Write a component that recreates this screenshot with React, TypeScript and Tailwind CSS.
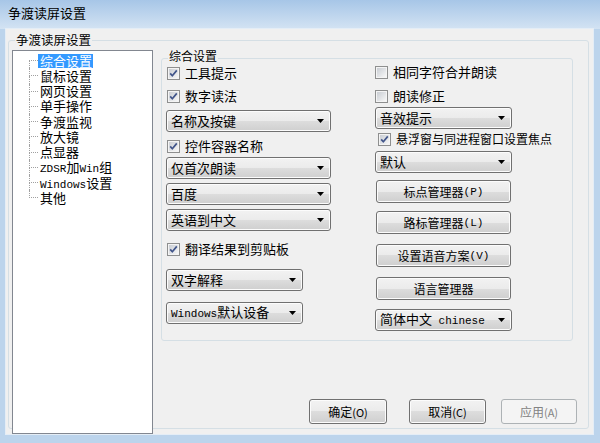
import type { ReactNode } from 'react'

const mono = "font-['Liberation_Mono','Noto_Sans_CJK_SC',monospace] text-[11px]"

function Box({ checked }: { checked?: boolean }) {
  return (
    <svg width="13" height="13" viewBox="0 0 13 13" className="shrink-0">
      <defs>
        <linearGradient id="cbg" x1="0" y1="0" x2="1" y2="1">
          <stop offset="0" stopColor="#c9cdd3" />
          <stop offset="1" stopColor="#f7f7f7" />
        </linearGradient>
      </defs>
      <rect x="0.5" y="0.5" width="12" height="12" fill="#f4f4f4" stroke="#8e8f8f" />
      <rect x="2" y="2" width="9" height="9" fill="url(#cbg)" />
      {checked && (
        <path d="M3.2 6.4 L5.3 8.8 L9.8 3.4" fill="none" stroke="#41558a" strokeWidth="1.7" strokeLinejoin="round" />
      )}
    </svg>
  )
}

function Check({ label, checked, className = '', text = 'text-[13px]' }: { label: string; checked?: boolean; className?: string; text?: string }) {
  return (
    <div className={`flex h-[16px] items-center gap-[5px] whitespace-nowrap ${className}`}>
      <Box checked={checked} />
      <span className={`${text} leading-[16px]`}>{label}</span>
    </div>
  )
}

function Select({ children, className = '' }: { children: ReactNode; className?: string }) {
  return (
    <div className={`flex h-[22px] items-center justify-between rounded-[3px] border border-[#707070] bg-[linear-gradient(#f2f2f2,#ebebeb_50%,#dddddd_50%,#cfcfcf)] pl-[4px] pr-[6px] shadow-[inset_0_0_0_1px_#fcfcfc] ${className}`}>
      <span className="whitespace-nowrap text-[13px] leading-[16px]">{children}</span>
      <svg width="7" height="4" viewBox="0 0 7 4">
        <path d="M0 0 H7 L3.5 4 Z" fill="#000" />
      </svg>
    </div>
  )
}

function Btn({ children, className = '', disabled }: { children: ReactNode; className?: string; disabled?: boolean }) {
  const look = disabled
    ? 'border-[#adb2b5] bg-[#f4f4f4] text-[#838383]'
    : 'border-[#707070] bg-[linear-gradient(#f2f2f2,#ebebeb_50%,#dddddd_50%,#cfcfcf)] shadow-[inset_0_0_0_1px_#fcfcfc]'
  return (
    <div className={`flex items-center justify-center whitespace-nowrap rounded-[3px] border text-[12px] leading-[16px] ${look} ${className}`}>
      {children}
    </div>
  )
}

const treeItems: ReactNode[] = [
  '综合设置',
  '鼠标设置',
  '网页设置',
  '单手操作',
  '争渡监视',
  '放大镜',
  '点显器',
  <>
    <span className={mono}>ZDSR</span>加<span className={mono}>Win</span>组
  </>,
  <>
    <span className={mono}>Windows</span>设置
  </>,
  '其他',
]

export default function App() {
  const last = treeItems.length - 1
  return (
    <div className="flex h-[443px] w-[600px] flex-col overflow-hidden bg-[#bcd4ec] font-['Noto_Sans_CJK_SC','Noto_Sans',sans-serif] text-black">
      {/* title bar */}
      <div className="flex h-[29px] shrink-0 items-center bg-[linear-gradient(#a7c6e7,#d3e3f3)] pb-[3px] pl-[8px] text-[13px] leading-[16px]">
        争渡读屏设置
      </div>

      {/* client */}
      <div className="ml-[6px] h-[405px] w-[587px] bg-[#f0f0f0] shadow-[0_0_0_1px_#e4edf6]">
        <div className="relative ml-[2px] mt-[11px] flex h-[389px] w-[581px] rounded-[3px] border border-[#d5dfe5]">
          <span className="absolute -top-[8px] left-[6px] bg-[#f0f0f0] px-[1px] text-[12.5px] leading-[14px]">争渡读屏设置</span>

          {/* tree */}
          <div className="ml-[3px] mt-[9px] h-[384px] w-[141px] shrink-0 border border-[#828790] bg-white pt-[2px]">
            {treeItems.map((t, i) => (
              <div key={i} className="flex h-[15.25px] items-stretch">
                <div className="w-[16px]" />
                <div className="flex w-[9px] flex-col">
                  <div className={`flex-1 border-b border-dotted border-[#a0a0a0] ${i > 0 ? 'border-l' : ''}`} />
                  <div className={`flex-1 border-dotted border-[#a0a0a0] ${i < last ? 'border-l' : ''}`} />
                </div>
                <div className="flex items-center">
                  <span
                    className={`h-[14px] whitespace-nowrap pl-[2px] pr-[1px] text-[13px] leading-[14px] ${
                      i === 0 ? 'bg-[#3399ff] text-white' : ''
                    }`}
                  >
                    {t}
                  </span>
                </div>
              </div>
            ))}
          </div>

          {/* right side */}
          <div className="ml-[8px] mt-[17px] flex flex-col">
            <div className="relative flex h-[283px] w-[412px] rounded-[3px] border border-[#d5dfe5]">
              <span className="absolute -top-[10px] left-[6px] bg-[#f0f0f0] px-[1px] text-[12px] leading-[14px]">综合设置</span>

              <div className="ml-[4px] flex w-[165px] flex-col">
                <Check className="mt-[6px] pl-[1px]" checked label="工具提示" />
                <Check className="mt-[7px] pl-[1px]" checked label="数字读法" />
                <Select className="mt-[6px] w-[165px]">名称及按键</Select>
                <Check className="mt-[6px] pl-[1px]" checked label="控件容器名称" />
                <Select className="mt-[3px] w-[165px]">仅首次朗读</Select>
                <Select className="mt-[4px] w-[165px]">百度</Select>
                <Select className="mt-[4px] w-[165px]">英语到中文</Select>
                <Check className="mt-[10px] pl-[1px]" checked label="翻译结果到剪贴板" />
                <Select className="mt-[12px] w-[137px]">双字解释</Select>
                <Select className="mt-[11px] w-[137px]">
                  <span className={mono}>Windows</span>默认设备
                </Select>
              </div>

              <div className="ml-[44px] flex w-[190px] flex-col">
                <Check className="mt-[5px]" label="相同字符合并朗读" />
                <Check className="mt-[8px]" label="朗读修正" />
                <Select className="mt-[3px] w-[137px]">音效提示</Select>
                <Check className="mt-[2px] pl-[3px]" text="text-[12px]" checked label="悬浮窗与同进程窗口设置焦点" />
                <Select className="mt-[4px] w-[137px]">默认</Select>
                <Btn className="ml-[1px] mt-[7px] h-[23px] w-[135px]">
                  标点管理器<span className={mono}> (P)</span>
                </Btn>
                <Btn className="ml-[1px] mt-[8px] h-[23px] w-[135px]">
                  路标管理器<span className={mono}> (L)</span>
                </Btn>
                <Btn className="ml-[1px] mt-[10px] h-[23px] w-[135px]">
                  设置语音方案<span className={mono}> (V)</span>
                </Btn>
                <Btn className="ml-[1px] mt-[10px] h-[23px] w-[135px] text-[12.5px]">语言管理器</Btn>
                <Select className="mt-[9px] w-[137px]">
                  简体中文<span className={mono}> chinese</span>
                </Select>
              </div>
            </div>

            <div className="ml-[148px] mt-[58px] flex">
              <Btn className="h-[25px] w-[78px]">
                确定<span className="text-[11px]"> (O)</span>
              </Btn>
              <Btn className="ml-[22px] h-[25px] w-[77px]">
                取消<span className="text-[11px]"> (C)</span>
              </Btn>
              <Btn disabled className="ml-[15px] h-[25px] w-[76px]">
                应用<span className="text-[11px]"> (A)</span>
              </Btn>
            </div>
          </div>
        </div>
      </div>
    </div>
  )
}
